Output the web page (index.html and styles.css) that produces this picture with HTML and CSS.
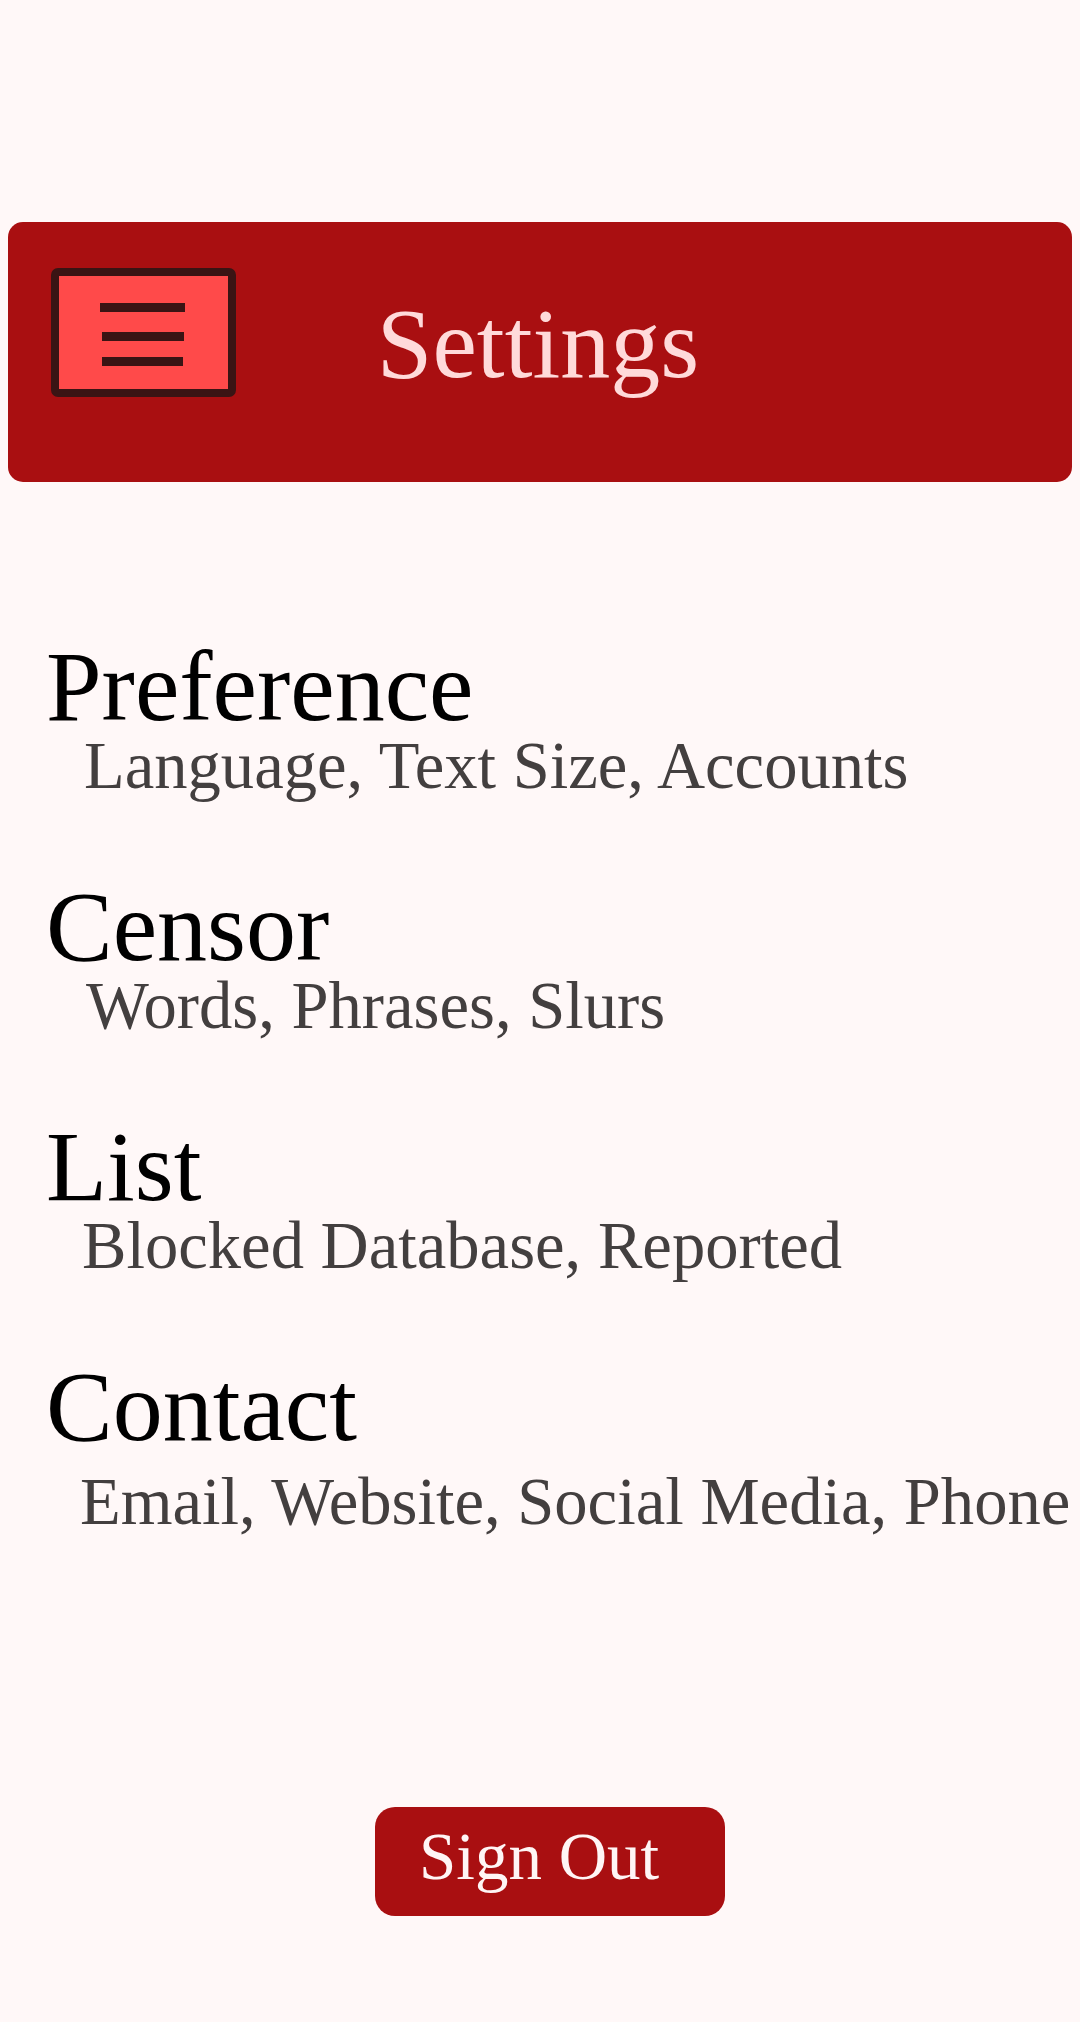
FILE: index.html
```html
<!DOCTYPE html>
<html lang="en">
<head>
<meta charset="utf-8">
<title>Settings</title>
<link rel="stylesheet" href="styles.css">
</head>
<body>
<div class="page">
  <header class="header">
    <button class="menu-btn" aria-label="Menu">
      <svg width="185" height="129" viewBox="0 0 185 129">
        <rect x="4" y="4" width="177" height="121" rx="3" fill="#FF4A4A" stroke="#3A1414" stroke-width="8"/>
        <rect x="49" y="35" width="85" height="9" fill="#3A1414"/>
        <rect x="51" y="64" width="82" height="9" fill="#3A1414"/>
        <rect x="51" y="89" width="81" height="9" fill="#3A1414"/>
      </svg>
    </button>
    <h1 class="title">Settings</h1>
    <div class="spacer"></div>
  </header>

  <main class="list">
    <section class="item">
      <h2 class="item-title">Preference</h2>
      <p class="item-sub sub-pref">Language, Text Size, Accounts</p>
    </section>
    <section class="item">
      <h2 class="item-title">Censor</h2>
      <p class="item-sub sub-censor">Words, Phrases, Slurs</p>
    </section>
    <section class="item">
      <h2 class="item-title">List</h2>
      <p class="item-sub sub-list">Blocked Database, Reported</p>
    </section>
    <section class="item">
      <h2 class="item-title">Contact</h2>
      <p class="item-sub sub-contact">Email, Website, Social Media, Phone</p>
    </section>
  </main>

  <footer class="footer">
    <button class="signout">Sign Out</button>
  </footer>
</div>
</body>
</html>
```

FILE: styles.css
```css
html, body {
  margin: 0;
  padding: 0;
  background: #FFF8F8;
}

body {
  font-family: "Liberation Serif", "Times New Roman", serif;
  color: #000;
}

.page {
  width: 1080px;
  min-height: 2022px;
  padding-top: 222px;
  box-sizing: border-box;
}

.header {
  margin: 0 8px;
  height: 260px;
  background: #A90F11;
  border-radius: 15px;
  display: grid;
  grid-template-columns: 1fr auto 1fr;
  align-items: start;
}

.menu-btn {
  justify-self: start;
  margin: 46px 0 0 43px;
  padding: 0;
  border: 0;
  background: none;
  width: 185px;
  height: 129px;
  display: block;
}

.menu-btn svg {
  display: block;
}

.title {
  margin: 72px 0 0;
  font-family: "Liberation Serif", "Times New Roman", serif;
  font-weight: normal;
  font-size: 100px;
  line-height: 100px;
  color: #FFDADA;
  transform: translateX(-2px);
}

.list {
  margin-top: 159px;
  padding-left: 46px;
  display: flex;
  flex-direction: column;
  gap: 82px;
}

.item {
  display: flex;
  flex-direction: column;
}

.item-title {
  margin: 0;
  font-weight: normal;
  font-size: 100px;
  line-height: 92px;
  color: #000;
}

.item-sub {
  margin: 0;
  font-size: 66.6px;
  line-height: 66px;
  color: #433F3F;
  white-space: nowrap;
}

.sub-pref { margin-left: 38px; }
.sub-censor { margin-left: 40px; }
.sub-list { margin-left: 36px; }
.sub-contact { margin-left: 34px; margin-top: 16px; }

.footer {
  margin-top: 272px;
  padding-left: 375px;
  display: flex;
}

.signout {
  width: 350px;
  box-sizing: border-box;
  padding: 16px 0 26px 44px;
  border: 0;
  border-radius: 20px;
  background: #A90F11;
  color: #FFF5F5;
  font-family: "Liberation Serif", "Times New Roman", serif;
  font-size: 67px;
  line-height: 67px;
  text-align: left;
  display: block;
}
```
